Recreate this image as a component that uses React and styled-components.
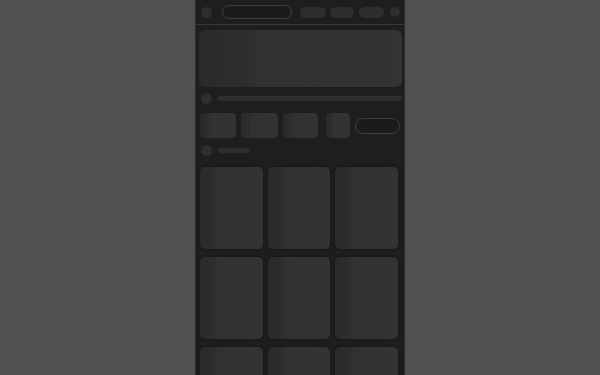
import styled, { createGlobalStyle, css } from 'styled-components';

const GlobalStyle = createGlobalStyle`
  html, body {
    margin: 0;
    padding: 0;
    background: #515151;
    font-family: "Liberation Sans", Arial, sans-serif;
    overflow: hidden;
  }
`;

const shimmer = css`
  background: linear-gradient(
    90deg,
    #2a2a2a 0%,
    #2d2d2d 22%,
    #323232 30%,
    #333333 100%
  );
`;

const Page = styled.div`
  display: flex;
  justify-content: center;
  height: 100vh;
  overflow: hidden;
`;

const Phone = styled.div`
  width: 208px;
  min-height: 100%;
  background: #1e1e1e;
  border-left: 1px solid #2b2b2b;
  border-right: 1px solid #2b2b2b;
`;

const Header = styled.div`
  height: 25px;
  display: flex;
  align-items: center;
  padding: 0 4px;
  border-bottom: 1px solid #3a3a3a;
  box-sizing: border-box;
`;

const Dot = styled.div`
  flex: none;
  width: ${(p) => p.size || 11}px;
  height: ${(p) => p.size || 11}px;
  border-radius: 50%;
  margin-left: ${(p) => p.offset || 0}px;
  background: #2e2e2e;
`;

const Search = styled.div`
  width: 69px;
  height: 12px;
  margin-left: 10px;
  border: 1px solid #3e3e3e;
  border-radius: 8px;
  background: #1b1b1b;
`;

const NavPill = styled.div`
  width: ${(p) => p.w}px;
  height: 11px;
  margin-left: ${(p) => p.offset}px;
  border-radius: 6px;
  background: #2e2e2e;
`;

const Body = styled.div`
  padding: 5px 4px 0;
  display: flex;
  flex-direction: column;
`;

const Hero = styled.div`
  height: 57px;
  margin: 0 -2px 0 -1px;
  border-radius: 6px;
  ${shimmer}
`;

const Line = styled.div`
  display: flex;
  align-items: center;
  margin-top: ${(p) => p.top}px;
  margin-right: ${(p) => p.right || 0}px;
`;

const Bar = styled.div`
  height: 5px;
  margin-left: 6px;
  border-radius: 3px;
  background: #2e2e2e;
  ${(p) => (p.w ? `width: ${p.w}px;` : 'flex: 1;')}
`;

const Chips = styled.div`
  display: flex;
  align-items: center;
  margin-top: 9px;
  height: 25px;
`;

const Chip = styled.div`
  width: ${(p) => p.w}px;
  height: 25px;
  margin-left: ${(p) => p.offset || 0}px;
  border-radius: 4px;
  ${shimmer}
`;

const OutlinePill = styled.div`
  width: 43px;
  height: 14px;
  margin-left: 5px;
  border: 1px solid #3e3e3e;
  border-radius: 9px;
  background: #1b1b1b;
`;

const Grid = styled.div`
  margin: 11px 2px 0 0;
  display: grid;
  grid-template-columns: repeat(3, 1fr);
  column-gap: 5px;
  row-gap: 8px;
`;

const Tile = styled.div`
  height: 82px;
  border-radius: 5px;
  ${shimmer}
  box-shadow: 0 0 3px rgba(0, 0, 0, 0.45);
`;

export default function App() {
  return (
    <>
      <GlobalStyle />
      <Page>
        <Phone>
          <Header>
            <Dot offset={1} />
            <Search />
            <NavPill w={26} offset={8} />
            <NavPill w={25} offset={4} />
            <NavPill w={25} offset={5} />
            <Dot size={10} offset={6} />
          </Header>
          <Body>
            <Hero />
            <Line top={6} right={-2}>
              <Dot offset={1} />
              <Bar />
            </Line>
            <Chips>
              <Chip w={36} />
              <Chip w={37} offset={5} />
              <Chip w={35} offset={5} />
              <Chip w={24} offset={8} />
              <OutlinePill />
            </Chips>
            <Line top={7}>
              <Dot offset={1} />
              <Bar w={32} />
            </Line>
            <Grid>
              {Array.from({ length: 9 }, (_, i) => (
                <Tile key={i} />
              ))}
            </Grid>
          </Body>
        </Phone>
      </Page>
    </>
  );
}
